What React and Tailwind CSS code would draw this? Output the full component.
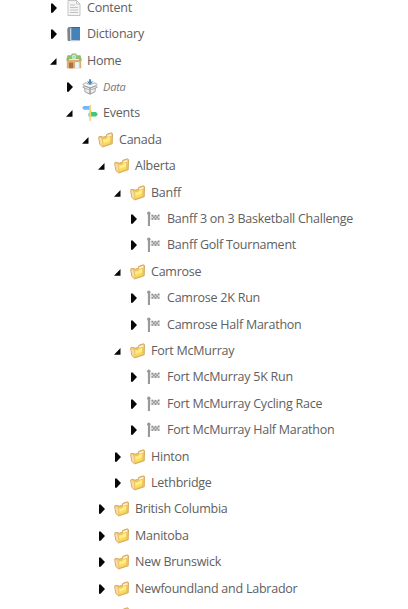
import React from "react";

function Arrow({ open }) {
  return (
    <svg className="h-4 w-4 shrink-0" viewBox="0 0 16 16">
      {open ? <path d="M6.5 5V11.7H0Z" fill="#080808" /> : <path d="M1 3.4H2.6L6.5 7.5V8.5L2.6 12.7H1Z" fill="#080808" />}
    </svg>
  );
}

const drawings = {
  folder: (
    <>
      <path d="M.6 5.2 1.4 4.3 5.4 5.1 8.3 4.3 8.8 2.3 13.3.8 14.5 1.6 14.2 11.8 4.6 14.9 1.8 12.4Z" fill="#f0c878" stroke="#cd9c49" strokeWidth=".8" />
      <path d="M9.2 3.2 13.1 1.9 13.5 3.6 9.2 5.4Z" fill="#fff3d8" />
      <path d="M4.6 7 7.8 6.7 8.8 5.4 12.7 4 12.5 11.3 5 13.9Z" fill="#fbdd58" stroke="#e0b34c" strokeWidth=".4" />
      <path d="M5.2 7.6 8.2 7.2 9.2 6 12.2 4.9 12 8.4 5.5 10.8Z" fill="#fff194" opacity=".85" />
      <path d="M1.2 5.4 3.8 7 4.5 14 2.3 12.2Z" fill="#f6dbab" />
    </>
  ),
  content: (
    <>
      <path d="M2 .5H10.5L14 4V15.5H2Z" fill="#f4f4f4" stroke="#c4c4c4" />
      <path d="M10.5.5V4H14Z" fill="#fff" stroke="#b8b8b8" strokeWidth=".8" />
      <path d="M4 5H9M4 7.5H12M4 10H12M4 12.5H12" stroke="#c0c3c6" strokeWidth="1" />
    </>
  ),
  dictionary: (
    <>
      <path d="M2.8 1H14V14.5H2.2L1.5 3Z" fill="#4682b7" />
      <path d="M1.5 2.5 3.2 1H4.8V15H2.2L1.5 14Z" fill="#7c858d" />
      <path d="M4.1 2.8 5.3 1.5V13.5L4.2 15Z" fill="#d5dde4" />
      <path d="M5.4 1H13.8V2H5.4Z" fill="#356894" />
      <path d="M4.5 14.2H12.5V15.3H4Z" fill="#c7cfd6" />
    </>
  ),
  home: (
    <>
      <path d="M.8 7H15.2V15.3H.8Z" fill="#e0ad70" />
      <path d="M3 9.6H7.2V15.3H3Z" fill="#a9734a" />
      <path d="M9 9.2H13.4V15.3H9Z" fill="#def3fc" />
      <path d="M11.2 9.2V15.3" stroke="#fff" strokeWidth=".7" />
      <path d="M1.5 2.2H5L6 .4H10L11 2.2H14.5L16 7.4H13.5L12.7 6.3H3.3L2.5 7.4H0Z" fill="#90bd70" />
      <circle cx="8" cy="3.9" r="2.3" fill="#c6e8c8" />
      <path d="M7 5V3H9V5Z" fill="#a2d8e0" />
    </>
  ),
  data: (
    <>
      <path d="M2.5 7 8 9V15.2L3 12.8ZM8 9 13.5 7 13 12.8 8 15.2Z" fill="#eeeeee" stroke="#959595" strokeWidth=".9" />
      <path d="M2.6 6.9.7 5.5 3.2 3.8 8 5.5 12.8 3.8 15.3 5.5 13.4 7 8 9ZM.7 8.2 2.5 7 8 9 6.3 10.5ZM15.3 8.2 13.5 7 8 9 9.7 10.5Z" fill="#f5f5f5" stroke="#9a9a9a" strokeWidth=".8" />
      <path d="M7 .2H9V2.6H11.2L8 6 4.8 2.6H7Z" fill="#4a8dc7" />
    </>
  ),
  events: (
    <>
      <path d="M.1 2.8 1.8 .9H8V4.8H1.8Z" fill="#6bb9fb" />
      <path d="M8.6 7H14L15.9 9.2 14 11.5H6.5V8.2Z" fill="#3dc87d" />
      <path d="M7.3 0H9.1V15.8H7.3Z" fill="#f5d572" />
      <path d="M8 6.2H10.5L8.8 7.5H7.3Z" fill="#d4dc9d" />
    </>
  ),
  flag: (
    <>
      <circle cx="2.8" cy="2.3" r="1.7" fill="#979797" />
      <path d="M1.9 2H4V15H1.9Z" fill="#999999" />
      <path d="M4 3.5H5.5V9H4Z" fill="#e8e8e8" />
      <path d="M5.5 3.8H13.5V8.9H5.5Z" fill="#d8d8d8" />
      <path d="M5.5 3.8h1.6v1.7H5.5zM8.7 4h1.6v1.6H8.7zM11.9 3.6h1.6v1.7h-1.6zM7.1 5.5h1.6v1.7H7.1zM10.3 5.5h1.6v1.7h-1.6zM5.5 7.2h1.6v1.6H5.5zM8.7 7.2h1.6v1.7H8.7zM11.9 7.2h1.6v1.6h-1.6z" fill="#8f8f8f" />
    </>
  ),
};

const indents = ["pl-[50px]", "pl-[66px]", "pl-[82px]", "pl-[98px]", "pl-[114px]", "pl-[130px]"];

const rows = [
  ["Content", 0, "content"],
  ["Dictionary", 0, "dictionary"],
  ["Home", 0, "home", true],
  ["Data", 1, "data"],
  ["Events", 1, "events", true],
  ["Canada", 2, "folder", true],
  ["Alberta", 3, "folder", true],
  ["Banff", 4, "folder", true],
  ["Banff 3 on 3 Basketball Challenge", 5, "flag"],
  ["Banff Golf Tournament", 5, "flag"],
  ["Camrose", 4, "folder", true],
  ["Camrose 2K Run", 5, "flag"],
  ["Camrose Half Marathon", 5, "flag"],
  ["Fort McMurray", 4, "folder", true],
  ["Fort McMurray 5K Run", 5, "flag"],
  ["Fort McMurray Cycling Race", 5, "flag"],
  ["Fort McMurray Half Marathon", 5, "flag"],
  ["Hinton", 4, "folder"],
  ["Lethbridge", 4, "folder"],
  ["British Columbia", 3, "folder"],
  ["Manitoba", 3, "folder"],
  ["New Brunswick", 3, "folder"],
  ["Newfoundland and Labrador", 3, "folder"],
];

export default function App() {
  return (
    <div className="h-[609px] w-full overflow-hidden bg-white font-['Open_Sans',sans-serif] text-[12.5px] leading-[14px] tracking-[-0.24px] text-[#606060]">
      <div className="-mt-[5.5px]">
        {rows.map(([label, level, icon, open]) => (
          <div key={label} className={`flex h-[26.41px] items-center whitespace-nowrap ${indents[level]}`}>
            <Arrow open={open} />
            <svg className="h-4 w-4 shrink-0" viewBox="0 0 16 16">{drawings[icon]}</svg>
            <span className={icon === "data" ? "ml-[5px] text-[11px] tracking-[-0.2px] italic text-[#777777]" : "ml-[5px]"}>{label}</span>
          </div>
        ))}
        <div className="flex h-[26.41px] items-center pl-[114px]">
          <svg className="h-4 w-4" viewBox="0 0 16 16">{drawings.folder}</svg>
        </div>
      </div>
    </div>
  );
}
